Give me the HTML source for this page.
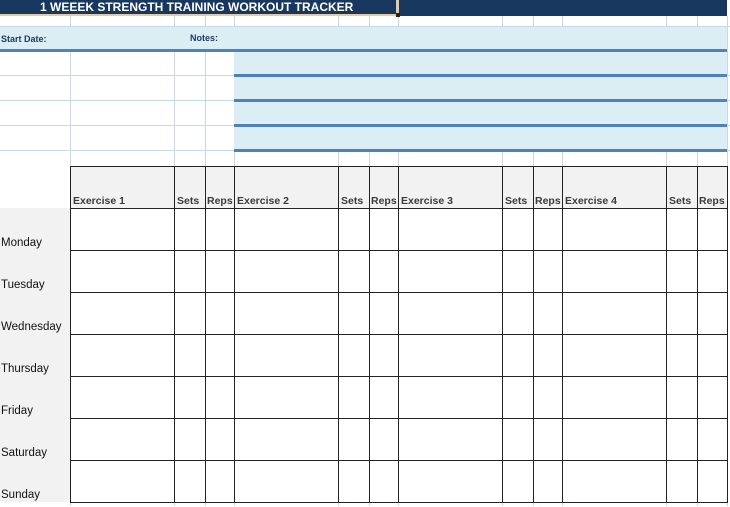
<!DOCTYPE html><html><head><style>
body{margin:0;width:730px;height:507px;position:relative;overflow:hidden;background:#fff;font-family:"Liberation Sans",sans-serif}
div{position:absolute;box-sizing:border-box}
.gv{width:1px;background:#c5d9e8}
.gh{height:1px;background:#c5d9e8}
.bl{height:3px;background:#4f81bd;left:234px;width:493px}
.lb{background:#daeef3}
.v{width:1px;background:#222;top:166px;height:337px}
.h{height:1px;background:#222;left:70px;width:658px}
.hd{font-size:10.5px;font-weight:bold;color:#3a3a3a;top:195px}
.day{font-size:11.5px;color:#111;left:1px}
</style></head><body>
<div class="gv" style="left:70px;top:16px;height:490px"></div>
<div class="gv" style="left:174px;top:16px;height:490px"></div>
<div class="gv" style="left:205px;top:16px;height:490px"></div>
<div class="gv" style="left:234px;top:16px;height:490px"></div>
<div class="gv" style="left:338px;top:16px;height:490px"></div>
<div class="gv" style="left:369px;top:16px;height:490px"></div>
<div class="gv" style="left:398px;top:16px;height:490px"></div>
<div class="gv" style="left:502px;top:16px;height:490px"></div>
<div class="gv" style="left:533px;top:16px;height:490px"></div>
<div class="gv" style="left:562px;top:16px;height:490px"></div>
<div class="gv" style="left:666px;top:16px;height:490px"></div>
<div class="gv" style="left:697px;top:16px;height:490px"></div>
<div class="gv" style="left:727px;top:16px;height:490px"></div>
<div class="gh" style="top:26px;left:0;width:730px"></div>
<div class="gh" style="top:75px;left:0;width:730px"></div>
<div class="gh" style="top:100px;left:0;width:730px"></div>
<div class="gh" style="top:125px;left:0;width:730px"></div>
<div class="gh" style="top:150px;left:0;width:730px"></div>
<div style="left:0;top:0;width:727px;height:16px;background:#17375e"></div>
<div style="left:0;top:14px;width:398px;height:2px;background:#e8c9a0"></div>
<div style="left:396px;top:0;width:3px;height:15px;background:#e8c9a0"></div>
<div style="left:396px;top:13px;width:4px;height:4px;background:#222"></div>
<div style="left:40px;top:0;color:#fff;font-weight:bold;font-size:12px;line-height:14px">1 WEEEK STRENGTH TRAINING WORKOUT TRACKER</div>
<div class="lb" style="left:0;top:27px;width:727px;height:23px"></div>
<div class="lb" style="left:234px;top:50px;width:493px;height:101px"></div>
<div class="bl" style="left:0;width:727px;top:49px"></div>
<div class="bl" style="top:74px"></div>
<div class="bl" style="top:99px"></div>
<div class="bl" style="top:124px"></div>
<div class="bl" style="top:149px"></div>
<div style="left:1px;top:34px;font-size:9px;font-weight:bold;color:#1f3a5a">Start Date:</div>
<div style="left:190px;top:33px;font-size:9px;font-weight:bold;color:#1f3a5a">Notes:</div>
<div style="left:70px;top:166px;width:658px;height:42px;background:#f2f2f2"></div>
<div style="left:0;top:208px;width:70px;height:294px;background:#f2f2f2"></div>
<div style="left:70px;top:208px;width:658px;height:294px;background:#fff"></div>
<div class="v" style="left:70px"></div><div class="v" style="left:174px"></div><div class="v" style="left:205px"></div><div class="v" style="left:234px"></div><div class="v" style="left:338px"></div><div class="v" style="left:369px"></div><div class="v" style="left:398px"></div><div class="v" style="left:502px"></div><div class="v" style="left:533px"></div><div class="v" style="left:562px"></div><div class="v" style="left:666px"></div><div class="v" style="left:697px"></div><div class="v" style="left:727px"></div>
<div class="h" style="top:166px"></div><div class="h" style="top:208px"></div><div class="h" style="top:250px"></div><div class="h" style="top:292px"></div><div class="h" style="top:334px"></div><div class="h" style="top:376px"></div><div class="h" style="top:418px"></div><div class="h" style="top:460px"></div><div class="h" style="top:502px"></div>
<div class="hd" style="left:73px">Exercise 1</div><div class="hd" style="left:177px">Sets</div><div class="hd" style="left:207px">Reps</div>
<div class="hd" style="left:237px">Exercise 2</div><div class="hd" style="left:341px">Sets</div><div class="hd" style="left:371px">Reps</div>
<div class="hd" style="left:401px">Exercise 3</div><div class="hd" style="left:505px">Sets</div><div class="hd" style="left:535px">Reps</div>
<div class="hd" style="left:565px">Exercise 4</div><div class="hd" style="left:669px">Sets</div><div class="hd" style="left:699px">Reps</div>
<div class="day" style="top:237px">Monday</div>
<div class="day" style="top:279px">Tuesday</div>
<div class="day" style="top:321px">Wednesday</div>
<div class="day" style="top:363px">Thursday</div>
<div class="day" style="top:405px">Friday</div>
<div class="day" style="top:447px">Saturday</div>
<div class="day" style="top:489px">Sunday</div>
</body></html>
